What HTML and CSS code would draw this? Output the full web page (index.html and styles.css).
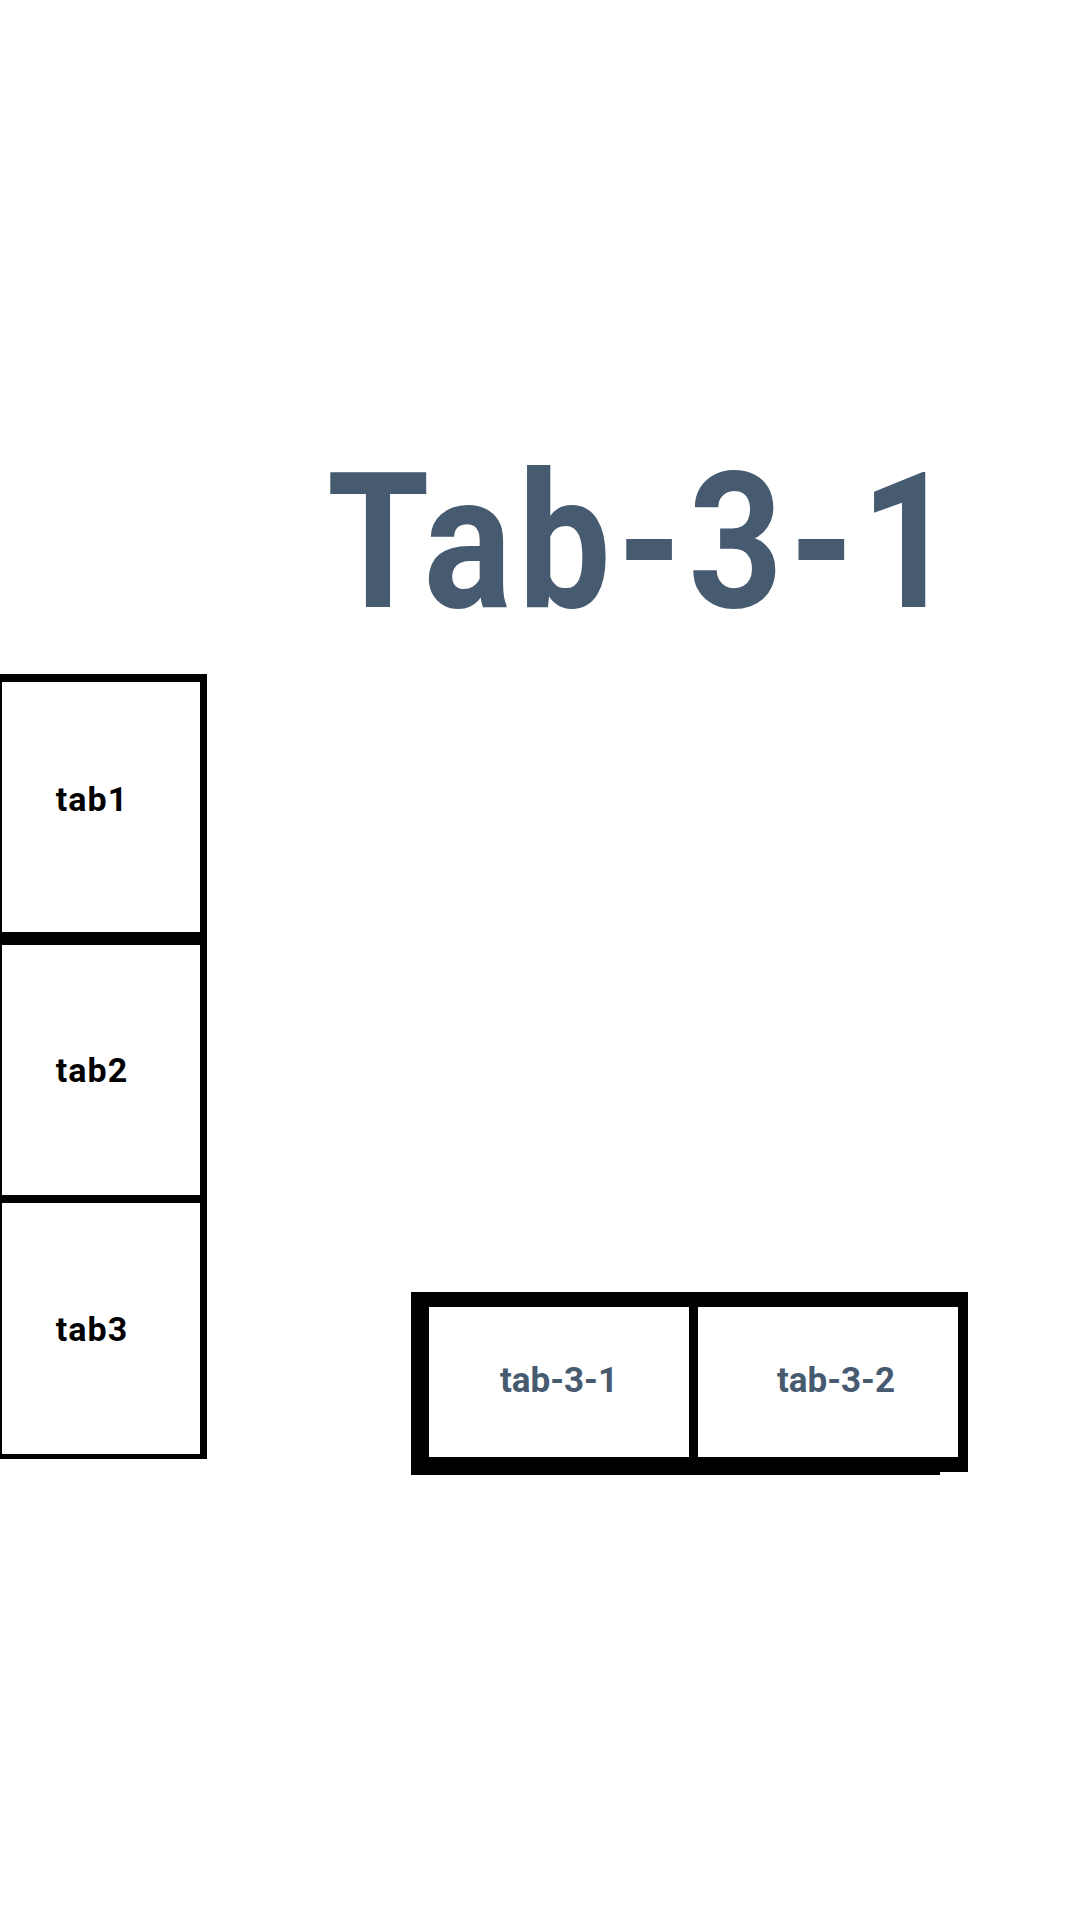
FILE: index.html
```html
<!DOCTYPE html>
<html lang="en">
<head>
<meta charset="utf-8">
<title>Tabs</title>
<link rel="stylesheet" href="styles.css">
</head>
<body>
<div class="page">
  <h1 class="title">Tab-3-1</h1>
  <div class="main">
    <nav class="side-tabs">
      <div class="side-tab side-tab-1">tab1</div>
      <div class="side-tab side-tab-2">tab2</div>
      <div class="side-tab side-tab-3">tab3</div>
    </nav>
    <section class="panel">
      <div class="subtabs">
        <div class="subtab subtab-1">tab-3-1</div>
        <div class="subtab subtab-2">tab-3-2</div>
      </div>
    </section>
  </div>
</div>
</body>
</html>
```
FILE: styles.css
```css
html, body {
  margin: 0;
  padding: 0;
  background: #ffffff;
}

.page {
  width: 1080px;
  height: 1920px;
  padding-top: 447px;
  box-sizing: border-box;
  font-family: Roboto, "Liberation Sans", sans-serif;
  font-weight: 700;
}

.title {
  width: max-content;
  margin: 0 0 37px 327px;
  font-size: 190px;
  line-height: 190px;
  font-weight: 700;
  letter-spacing: 7px;
  color: #475b70;
  white-space: nowrap;
  transform: scaleX(0.87);
  transform-origin: left center;
}

.main {
  display: flex;
  align-items: flex-start;
}

.side-tabs {
  display: flex;
  flex-direction: column;
  width: 207px;
  border-top: 8px solid #000;
}

.side-tab {
  display: flex;
  align-items: center;
  justify-content: center;
  padding-right: 18px;
  border-left: 2px solid #000;
  border-right: 7px solid #000;
  font-size: 34px;
  letter-spacing: 1px;
  color: #000;
}

.side-tab-1 {
  height: 234px;
  padding-bottom: 16px;
  border-bottom: 13px solid #000;
}

.side-tab-2 {
  height: 250px;
  border-bottom: 8px solid #000;
}

.side-tab-3 {
  height: 251px;
  border-bottom: 5px solid #000;
}

.panel {
  padding-top: 618px;
  padding-left: 204px;
}

.subtabs {
  position: relative;
  display: flex;
  border-style: solid;
  border-color: #000;
  border-width: 15px 10px 18px 18px;
}

.subtabs::after {
  content: "";
  position: absolute;
  right: -10px;
  bottom: -18px;
  width: 28px;
  height: 3px;
  background: #fff;
}

.subtab {
  display: flex;
  align-items: center;
  justify-content: center;
  width: 260px;
  height: 146px;
  padding-bottom: 4px;
  box-sizing: content-box;
  font-size: 35px;
  color: #475b70;
}

.subtab-1 {
  border-right: 9px solid #000;
}

.subtab-2 {
  padding-left: 16px;
  width: 244px;
}
```
